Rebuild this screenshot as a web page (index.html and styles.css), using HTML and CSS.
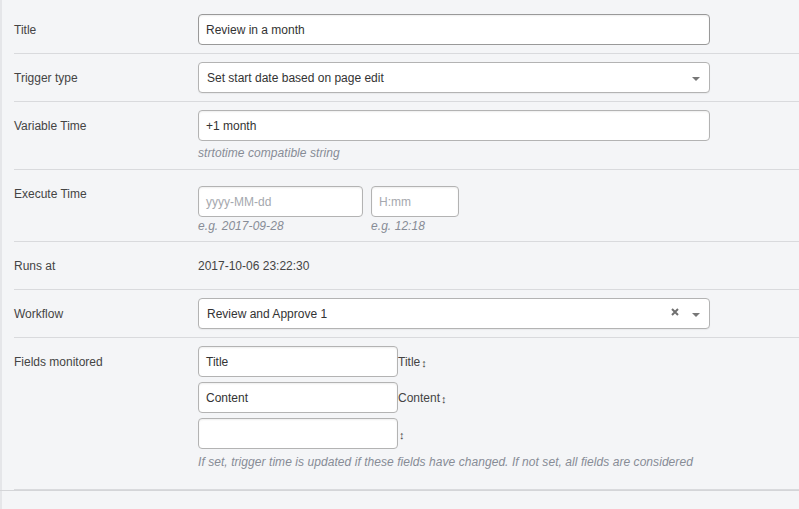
FILE: index.html
```html
<!DOCTYPE html>
<html>
<head>
<meta charset="utf-8">
<link rel="stylesheet" href="styles.css">
</head>
<body>
<div class="page">
  <div class="form">
    <div class="row">
      <div class="label">Title</div>
      <div class="field">
        <div class="input input-focus">Review in a month</div>
      </div>
    </div>
    <div class="row">
      <div class="label">Trigger type</div>
      <div class="field">
        <div class="input select"><span class="sel-text">Set start date based on page edit</span><span class="caret"></span></div>
      </div>
    </div>
    <div class="row">
      <div class="label">Variable Time</div>
      <div class="field">
        <div class="input">+1 month</div>
        <div class="help help-gap">strtotime compatible string</div>
      </div>
    </div>
    <div class="row">
      <div class="label">Execute Time</div>
      <div class="field field-inline">
        <div class="col">
          <div class="input date placeholder">yyyy-MM-dd</div>
          <div class="help">e.g. 2017-09-28</div>
        </div>
        <div class="col">
          <div class="input time placeholder">H:mm</div>
          <div class="help">e.g. 12:18</div>
        </div>
      </div>
    </div>
    <div class="row">
      <div class="label">Runs at</div>
      <div class="field">
        <div class="value">2017-10-06 23:22:30</div>
      </div>
    </div>
    <div class="row">
      <div class="label">Workflow</div>
      <div class="field">
        <div class="input select"><span class="sel-text">Review and Approve 1</span>
          <svg class="clear" width="8" height="8" viewBox="0 0 8 8"><path d="M1 1L7 7M7 1L1 7" stroke="#707070" stroke-width="2"/></svg>
          <span class="caret"></span></div>
      </div>
    </div>
    <div class="row row-last">
      <div class="label">Fields monitored</div>
      <div class="field">
        <div class="list-item"><div class="input small">Title</div><span class="item-label">Title</span><span class="handle">↕</span></div>
        <div class="list-item"><div class="input small">Content</div><span class="item-label">Content</span><span class="handle">↕</span></div>
        <div class="list-item"><div class="input small"></div><span class="item-label"></span><span class="handle">↕</span></div>
        <div class="help help-wide">If set, trigger time is updated if these fields have changed. If not set, all fields are considered</div>
      </div>
    </div>
  </div>
  <div class="footer"></div>
</div>
</body>
</html>
```

FILE: styles.css
```css
html, body {
  margin: 0;
  padding: 0;
  background: #f4f5f7;
}
body {
  font-family: "Liberation Sans", Arial, Helvetica, sans-serif;
  font-size: 12px;
  color: #444;
}
.page {
  min-height: 509px;
  border-left: 2px solid #e5e6e9;
  box-sizing: border-box;
}
.form {
  padding: 6px 0 0 12px;
}
.row {
  display: flex;
  align-items: flex-start;
  padding: 8px 0;
  border-bottom: 1px solid #d9dadd;
}
.row-last {
  padding-bottom: 19px;
}
.label {
  width: 184px;
  flex: none;
  height: 31px;
  line-height: 33px;
  color: #444;
}
.field {
  width: 512px;
  flex: none;
}
.field-inline {
  display: flex;
  gap: 8px;
}
.input {
  box-sizing: border-box;
  height: 31px;
  line-height: 29px;
  padding: 1px 7px 0;
  background: #fff;
  border: 1px solid #b3b3b3;
  border-radius: 4px;
  box-shadow: inset 0 1px 2px rgba(0, 0, 0, 0.07);
  color: #333;
  white-space: nowrap;
  overflow: hidden;
}
.input-focus {
  border-color: #999;
}
.select {
  display: flex;
  align-items: center;
  padding: 1px 9px 0 8px;
  box-shadow: 0 1px 1px rgba(0, 0, 0, 0.05);
}
.sel-text {
  flex: 1;
}
.caret {
  width: 0;
  height: 0;
  border-left: 4px solid transparent;
  border-right: 4px solid transparent;
  border-top: 4px solid #777;
  margin-top: 1px;
}
.clear {
  margin-right: 13px;
  margin-top: -4px;
}
.date {
  width: 165px;
  margin-top: 8px;
}
.time {
  width: 88px;
  margin-top: 8px;
}
.placeholder {
  color: #a5a8ae;
}
.help {
  font-style: italic;
  color: #878c96;
  height: 16px;
  line-height: 18px;
  letter-spacing: 0.06px;
}
.help-gap {
  margin-top: 4px;
  line-height: 16px;
}
.help-wide {
  margin-top: 5px;
  line-height: 16px;
  white-space: nowrap;
}
.value {
  height: 31px;
  line-height: 33px;
  color: #444;
}
.list-item {
  display: flex;
  align-items: center;
  margin-bottom: 5px;
}
.list-item:last-of-type {
  margin-bottom: 0;
}
.small {
  width: 200px;
  flex: none;
}
.item-label {
  color: #444;
  padding-top: 1px;
}
.handle {
  font-size: 11px;
  color: #444;
  margin-left: 1px;
  margin-top: 2px;
}
.footer {
  margin-left: -2px;
  border-top: 1px solid #d4d5d8;
}
```
